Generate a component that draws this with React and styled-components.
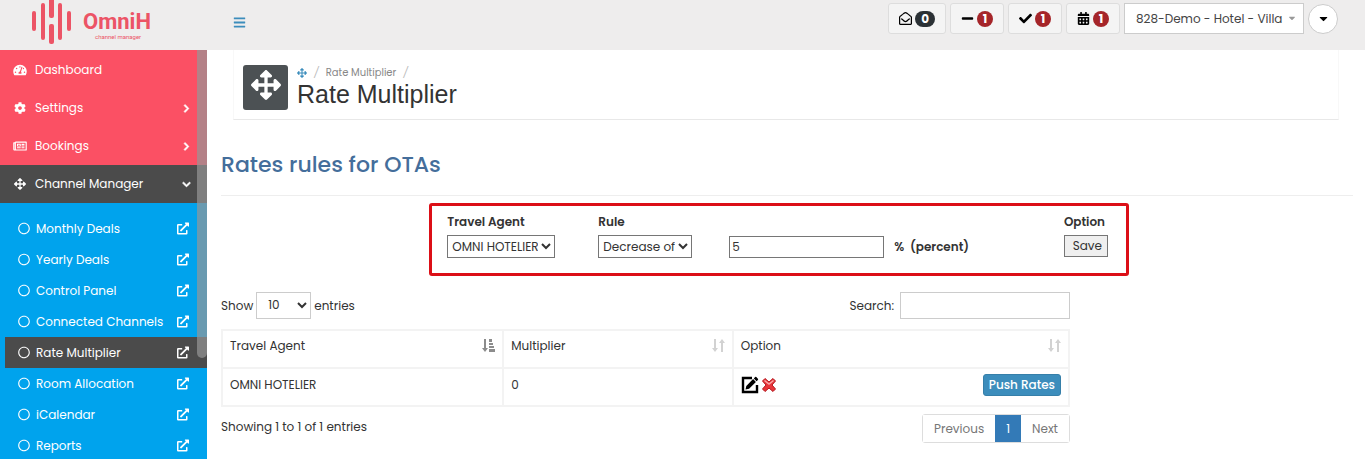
import styled, { createGlobalStyle } from "styled-components";
import { useState } from "react";
import {
  FaArrowsAlt,
  FaBars,
  FaCalendarAlt,
  FaCaretDown,
  FaCheck,
  FaChevronDown,
  FaChevronRight,
  FaCog,
  FaExternalLinkAlt,
  FaMinus,
  FaRegCircle,
  FaRegEnvelopeOpen,
  FaRegNewspaper,
  FaTachometerAlt,
} from "react-icons/fa";

const menu = [
  { label: "Dashboard", icon: FaTachometerAlt },
  { label: "Settings", icon: FaCog, arrow: FaChevronRight },
  { label: "Bookings", icon: FaRegNewspaper, arrow: FaChevronRight },
  { label: "Channel Manager", icon: FaArrowsAlt, arrow: FaChevronDown, active: true },
];

const subMenu = [
  "Monthly Deals",
  "Yearly Deals",
  "Control Panel",
  "Connected Channels",
  "Rate Multiplier",
  "Room Allocation",
  "iCalendar",
  "Reports",
];

const notices = [
  { label: "Messages", icon: FaRegEnvelopeOpen, count: 0 },
  { label: "Cancelled", icon: FaMinus, count: 1, alert: true },
  { label: "Confirmed", icon: FaCheck, count: 1, alert: true },
  { label: "Calendar", icon: FaCalendarAlt, count: 1, alert: true },
];

const LogoBars = () => (
  <svg width="40" height="44" viewBox="0 0 40 44" fill="#ec5466" aria-hidden="true">
    <rect x="0" y="11" width="4" height="20" rx="2" />
    <rect x="9" y="3" width="4" height="37" rx="2" />
    <rect x="17" y="-3" width="5" height="21" rx="2" />
    <rect x="17" y="24" width="5" height="20" rx="2" />
    <rect x="26" y="3" width="4" height="37" rx="2" />
    <rect x="35" y="11" width="4" height="20" rx="2" />
  </svg>
);

const SortIcon = ({ sorted }) => (
  <svg width="13" height="13" viewBox="0 0 13 13" fill={sorted ? "#8c8c8c" : "#d2d2d2"} aria-hidden="true">
    <path d="M2 0h2v9h2L3 13 0 9h2z" />
    {sorted ? (
      <path d="M7 0h3v3H7zM7 4h4v2H7zM7 7h5v2H7zM7 10h6v3H7z" />
    ) : (
      <path d="M9 13h2V4h2L10 0 7 4h2z" />
    )}
  </svg>
);

const EditIcon = () => (
  <svg width="18" height="18" viewBox="0 0 18 18" aria-hidden="true">
    <path d="M11 2H2v14h14V9" fill="none" stroke="#000" strokeWidth="2.4" />
    <path d="M4.500 13.500l.8-3.600 6.800-6.800 2.800 2.800-6.800 6.800zM12.800 2.400l1.300-1.300q.6-.6 1.200 0l1.600 1.600q.6.6 0 1.200l-1.300 1.300z" />
  </svg>
);

const DeleteIcon = () => (
  <svg width="16" height="16" viewBox="0 0 16 16" aria-hidden="true">
    <path
      d="M4 1.500L8 5l4-3.500L14.500 4 11 8l3.500 4L12 14.500 8 11l-4 3.500L1.500 12 5 8 1.500 4z"
      fill="#e8353a"
      stroke="#b5161c"
      strokeLinejoin="round"
    />
    <path d="M3.500 3.500L8 7l4.500-3.500" fill="none" stroke="#f9a5a5" strokeWidth="1.500" />
  </svg>
);

export default function App() {
  const [amount, setAmount] = useState("5");
  return (
    <>
      <GlobalStyle />
      <Page>
        <TopBar>
          <Logo href="#">
            <LogoBars />
            <LogoText>
              <strong>OmniH</strong>
              <small>channel manager</small>
            </LogoText>
          </Logo>
          <Toggle aria-label="Toggle menu">
            <FaBars />
          </Toggle>
          <Tools>
            {notices.map(({ label, icon: Icon, count, alert }) => (
              <Notice key={label} aria-label={label}>
                <Icon />
                <Badge $alert={alert}>{count}</Badge>
              </Notice>
            ))}
            <HotelPicker>
              <select aria-label="Hotel">
                <option>828-Demo - Hotel - Villa</option>
              </select>
              <FaCaretDown />
            </HotelPicker>
            <RoundButton aria-label="Account">
              <FaCaretDown />
            </RoundButton>
          </Tools>
        </TopBar>
        <Body>
          <Sidebar>
            <Menu>
              {menu.map(({ label, icon: Icon, arrow: Arrow, active }) => (
                <li key={label}>
                  <MenuLink href="#" $active={active}>
                    <Icon />
                    <span>{label}</span>
                    {Arrow && <Arrow className="arrow" />}
                  </MenuLink>
                </li>
              ))}
            </Menu>
            <SubMenu>
              {subMenu.map((label) => (
                <li key={label}>
                  <SubLink href="#" $active={label === "Rate Multiplier"}>
                    <FaRegCircle />
                    <span>{label}</span>
                    <FaExternalLinkAlt />
                  </SubLink>
                </li>
              ))}
            </SubMenu>
            <ScrollThumb />
          </Sidebar>
          <Main>
            <PageHeader>
              <HeaderIcon>
                <FaArrowsAlt />
              </HeaderIcon>
              <div>
                <Breadcrumb aria-label="Breadcrumb">
                  <a href="#" aria-label="Home">
                    <FaArrowsAlt />
                  </a>
                  <i>/</i>
                  <span>Rate Multiplier</span>
                  <i>/</i>
                </Breadcrumb>
                <PageTitle>Rate Multiplier</PageTitle>
              </div>
            </PageHeader>
            <SectionTitle>Rates rules for OTAs</SectionTitle>
            <RuleForm onSubmit={(e) => e.preventDefault()}>
              <Field>
                <label htmlFor="agent">Travel Agent</label>
                <Select id="agent" $width="108px">
                  <option>OMNI HOTELIER</option>
                </Select>
              </Field>
              <Field>
                <label htmlFor="rule">Rule</label>
                <Select id="rule" $width="94px">
                  <option>Decrease of</option>
                </Select>
              </Field>
              <Percent>
                <input id="amount" value={amount} onChange={(e) => setAmount(e.target.value)} />
                <label htmlFor="amount">%&nbsp; (percent)</label>
              </Percent>
              <Field>
                <b>Option</b>
                <SaveButton>Save</SaveButton>
              </Field>
            </RuleForm>
            <Listing>
              <Bar>
                <label>
                  Show
                  <LengthSelect>
                    <option>10</option>
                  </LengthSelect>
                  entries
                </label>
                <label>
                  Search:
                  <SearchInput type="search" />
                </label>
              </Bar>
              <Table>
                <thead>
                  <tr>
                    <Th $width="33.200%">
                      <Split>Travel Agent <SortIcon sorted /></Split>
                    </Th>
                    <Th $width="27.100%">
                      <Split>Multiplier <SortIcon /></Split>
                    </Th>
                    <Th>
                      <Split>Option <SortIcon /></Split>
                    </Th>
                  </tr>
                </thead>
                <tbody>
                  <tr>
                    <td>OMNI HOTELIER</td>
                    <td>0</td>
                    <td>
                      <Split>
                        <RowActions>
                          <button aria-label="Edit"><EditIcon /></button>
                          <button aria-label="Delete"><DeleteIcon /></button>
                        </RowActions>
                        <PushButton>Push Rates</PushButton>
                      </Split>
                    </td>
                  </tr>
                </tbody>
              </Table>
              <Footer>
                <span>Showing 1 to 1 of 1 entries</span>
                <Pager>
                  <PageLink href="#">Previous</PageLink>
                  <PageLink href="#" $active>1</PageLink>
                  <PageLink href="#">Next</PageLink>
                </Pager>
              </Footer>
            </Listing>
          </Main>
        </Body>
      </Page>
    </>
  );
}

const GlobalStyle = createGlobalStyle`
  * {
    box-sizing: border-box;
  }
  body {
    margin: 0;
    background: #fff;
    color: #333;
    font: 12px/18px Poppins, Inter, sans-serif;
  }
  button, input, select {
    font: inherit;
    color: inherit;
  }
  button {
    cursor: pointer;
  }
  a {
    color: inherit;
    text-decoration: none;
  }
  ul {
    list-style: none;
    margin: 0;
    padding: 0;
  }
`;
const Page = styled.div`
  height: 100vh;
  display: flex;
  flex-direction: column;
  overflow: hidden;
`;
const TopBar = styled.header`
  flex: none;
  height: 50px;
  display: flex;
  align-items: flex-start;
  padding-right: 27px;
  background: #eeeded;
`;
const Logo = styled.a`
  width: 207px;
  padding-left: 32px;
  display: flex;
  gap: 11px;
  color: #ec5466;
`;
const LogoText = styled.span`
  display: flex;
  flex-direction: column;
  padding-top: 11px;
  font-family: Roboto, sans-serif;
  strong {
    font-size: 22px;
    line-height: 22px;
  }
  small {
    padding-left: 12px;
    font-size: 6px;
    line-height: 8px;
  }
`;
const Toggle = styled.button`
  margin: 8px 0 0 20px;
  padding: 6px;
  height: 28px;
  display: flex;
  align-items: center;
  border: 0;
  background: none;
  color: #3c8dbc;
  font-size: 13px;
`;
const Tools = styled.div`
  margin-left: auto;
  padding-top: 3px;
  display: flex;
  align-items: center;
  gap: 4px;
`;
const Notice = styled.button`
  height: 31px;
  padding: 0 10px;
  display: flex;
  align-items: center;
  gap: 3px;
  border: 1px solid #ddd;
  border-radius: 3px;
  background: #f4f4f4;
  color: #000;
  font-size: 13px;
`;
const Badge = styled.span`
  min-width: 16px;
  padding: 0 ${(props) => (props.$alert ? "5px" : "6px")};
  border-radius: 10px;
  background: ${(props) => (props.$alert ? "#a52529" : "#2b3135")};
  color: #fff;
  font-size: 12px;
  font-weight: 700;
  line-height: 16px;
  text-align: center;
`;
const HotelPicker = styled.div`
  position: relative;
  width: 180px;
  select {
    width: 100%;
    height: 31px;
    padding: 0 16px 0 11px;
    appearance: none;
    border: 1px solid #ccc;
    border-radius: 0;
    background: #fff;
    color: #444;
    font-size: 12px;
  }
  svg {
    position: absolute;
    right: 7px;
    top: 10px;
    color: #999;
    font-size: 10px;
    pointer-events: none;
  }
`;
const RoundButton = styled.button`
  width: 30px;
  height: 30px;
  padding: 0;
  display: grid;
  place-items: center;
  border: 1px solid #ccc;
  border-radius: 50%;
  background: #fff;
  color: #000;
  font-size: 13px;
`;
const Body = styled.div`
  flex: 1;
  min-height: 0;
  display: flex;
`;
const Sidebar = styled.nav`
  position: relative;
  flex: none;
  width: 207px;
  overflow: hidden;
  background: #00a3ed;
  color: #fff;
  font-size: 12px;
`;
const Menu = styled.ul`
  padding-top: 1px;
  background: #fb5064;
`;
const MenuLink = styled.a`
  height: 38px;
  padding: 0 16px 0 13px;
  display: flex;
  align-items: center;
  gap: 8px;
  background: ${(props) => (props.$active ? "#4b4b4b" : "none")};
  svg {
    width: 14px;
    height: 12px;
  }
  .arrow {
    width: 9px;
    height: 9px;
    margin-left: auto;
    stroke: #fff;
    stroke-width: 40px;
  }
`;
const SubMenu = styled.ul`
  padding: 10px 0 9px 5px;
`;
const SubLink = styled.a`
  height: 31px;
  padding: 0 18px 0 13px;
  display: flex;
  align-items: center;
  gap: 6px;
  background: ${(props) => (props.$active ? "#4b4b4b" : "none")};
  span {
    flex: 1;
  }
  svg {
    width: 12px;
    height: 13px;
  }
`;
const ScrollThumb = styled.div`
  position: absolute;
  top: 0;
  right: 0;
  width: 10px;
  height: 308px;
  border-radius: 0 0 5px 5px;
  background: rgba(150, 150, 150, 0.700);
`;
const Main = styled.main`
  flex: 1;
  min-width: 0;
  padding: 0 12px 0 14px;
  overflow: hidden;
`;
const PageHeader = styled.div`
  margin: 0 14px 0 12px;
  height: 70px;
  padding: 15px 9px 0;
  display: flex;
  gap: 9px;
  border: 1px solid #eee;
  border-width: 0 1px 1px;
  border-color: #f8f8f8 #f8f8f8 #e8e8e8;
`;
const HeaderIcon = styled.div`
  width: 45px;
  height: 45px;
  padding-top: 5px;
  display: flex;
  justify-content: center;
  border-radius: 3px;
  background: #4c5154;
  color: #fff;
  font-size: 30px;
`;
const Breadcrumb = styled.nav`
  display: flex;
  align-items: center;
  gap: 7px;
  height: 15px;
  color: #888;
  font-size: 10px;
  a {
    display: flex;
    color: #3c8dbc;
  }
  i {
    color: #bbb;
  }
`;
const PageTitle = styled.h1`
  margin: 0;
  font: 400 25px/29px "Liberation Sans", sans-serif;
`;
const SectionTitle = styled.h2`
  margin: 29px 0 7px;
  padding-bottom: 15px;
  border-bottom: 1px solid #eee;
  color: #446e9b;
  font-size: 22px;
  font-weight: 500;
  line-height: 31px;
`;
const RuleForm = styled.form`
  margin: 0 19.800% 16px 18.400%;
  padding: 7px 15px 15px;
  display: grid;
  grid-template-columns: 151px 131px 1fr 47px;
  border: 3px solid #dc0f17;
  border-radius: 3px;
`;
const Field = styled.div`
  display: flex;
  flex-direction: column;
  align-items: flex-start;
  gap: 4px;
  label, b {
    font-weight: 600;
  }
`;
const Select = styled.select`
  width: ${(props) => props.$width};
  height: 23px;
  padding: 0;
  border: 1px solid #767676;
  border-radius: 0;
  background: #fff;
`;
const Percent = styled.div`
  display: flex;
  align-items: center;
  align-self: end;
  gap: 10px;
  input {
    width: 155px;
    height: 22px;
    padding: 1px 2px;
    border: 1px solid #767676;
  }
  label {
    font-weight: 600;
  }
`;
const SaveButton = styled.button`
  height: 22px;
  width: 44px;
  padding: 0 0 0 3px;
  border: 1px solid #767676;
  background: #efefef;
`;
const Listing = styled.section`
  width: 75%;
`;
const Bar = styled.div`
  display: flex;
  justify-content: space-between;
  margin-bottom: 10px;
  label {
    display: flex;
    align-items: center;
    gap: 3px;
  }
`;
const LengthSelect = styled.select`
  width: 55px;
  height: 27px;
  padding: 0 0 3px 7px;
  border: 1px solid #ccc;
  border-radius: 0;
  background: #fff;
`;
const SearchInput = styled.input`
  width: 170px;
  height: 27px;
  margin-left: 3px;
  border: 1px solid #ccc;
`;
const Table = styled.table`
  width: 100%;
  border-collapse: collapse;
  table-layout: fixed;
  th, td {
    height: 38px;
    padding: 0 7px 7px 7px;
    border: 2px solid #f3f3f3;
    font-weight: 400;
    text-align: left;
  }
  td {
    padding-bottom: 5px;
  }
`;
const Th = styled.th`
  width: ${(props) => props.$width};
`;
const Split = styled.div`
  display: flex;
  align-items: center;
  justify-content: space-between;
`;
const RowActions = styled.div`
  display: flex;
  align-items: center;
  gap: 2px;
  button {
    display: flex;
    padding: 0;
    border: 0;
    background: none;
  }
`;
const PushButton = styled.button`
  height: 22px;
  padding: 0 5px;
  border: 1px solid #367fa9;
  border-radius: 3px;
  background: #3c8dbc;
  color: #fff;
  font-size: 12px;
  font-weight: 500;
`;
const Footer = styled.div`
  margin-top: 7px;
  display: flex;
  justify-content: space-between;
  > span {
    padding-top: 4px;
  }
`;
const Pager = styled.nav`
  display: flex;
  border: 1px solid #ddd;
  border-radius: 3px;
`;
const PageLink = styled.a`
  padding: 0 11px;
  background: ${(props) => (props.$active ? "#337ab7" : "#fff")};
  color: ${(props) => (props.$active ? "#fff" : "#777")};
  line-height: 27px;
`;
